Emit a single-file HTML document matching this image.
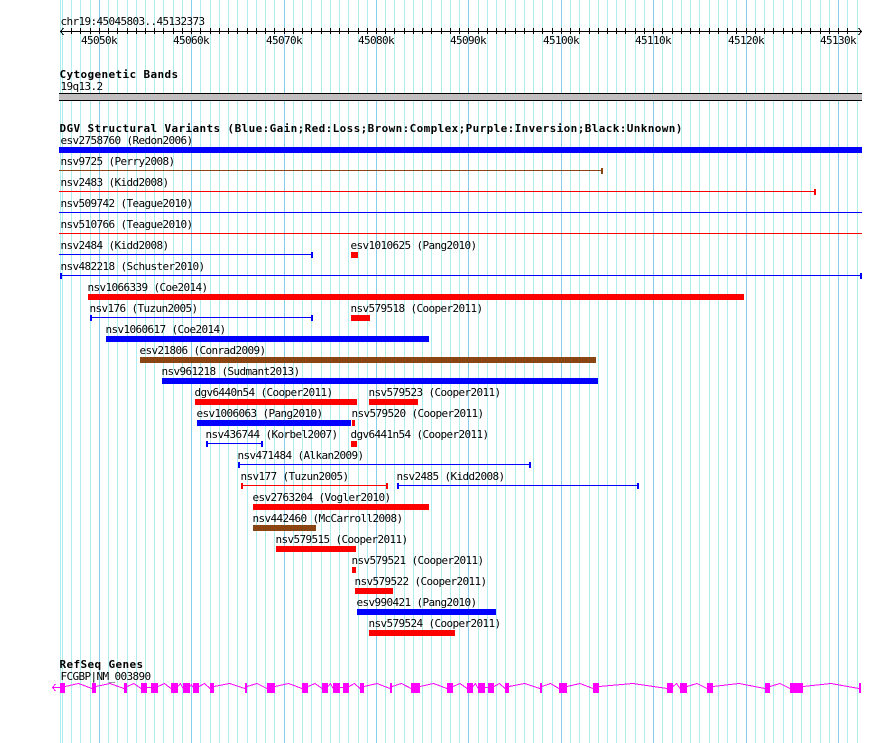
<!DOCTYPE html>
<html><head><meta charset="utf-8"><title>Tracks</title>
<style>
html,body{margin:0;padding:0;background:#fff}
svg{display:block}
text{font-family:"DejaVu Sans Mono","Liberation Mono",monospace;font-size:11px;letter-spacing:-.62px;fill:#000}
text.b{font-weight:bold;font-size:11px;letter-spacing:.38px}
</style></head><body>
<svg width="890" height="743" viewBox="0 0 890 743" xmlns="http://www.w3.org/2000/svg">
<g shape-rendering="crispEdges" fill="none">
<path stroke="#afeeee" d="M60.5 0V743M62.5 0V743M71.5 0V743M80.5 0V743M90.5 0V743M108.5 0V743M117.5 0V743M127.5 0V743M136.5 0V743M145.5 0V743M154.5 0V743M163.5 0V743M173.5 0V743M182.5 0V743M200.5 0V743M210.5 0V743M219.5 0V743M228.5 0V743M237.5 0V743M247.5 0V743M256.5 0V743M265.5 0V743M274.5 0V743M293.5 0V743M302.5 0V743M311.5 0V743M321.5 0V743M330.5 0V743M339.5 0V743M348.5 0V743M358.5 0V743M367.5 0V743M385.5 0V743M394.5 0V743M404.5 0V743M413.5 0V743M422.5 0V743M431.5 0V743M441.5 0V743M450.5 0V743M459.5 0V743M478.5 0V743M487.5 0V743M496.5 0V743M505.5 0V743M515.5 0V743M524.5 0V743M533.5 0V743M542.5 0V743M552.5 0V743M570.5 0V743M579.5 0V743M589.5 0V743M598.5 0V743M607.5 0V743M616.5 0V743M625.5 0V743M635.5 0V743M644.5 0V743M662.5 0V743M672.5 0V743M681.5 0V743M690.5 0V743M699.5 0V743M709.5 0V743M718.5 0V743M727.5 0V743M736.5 0V743M755.5 0V743M764.5 0V743M773.5 0V743M783.5 0V743M792.5 0V743M801.5 0V743M810.5 0V743M820.5 0V743M829.5 0V743M847.5 0V743M857.5 0V743"/>
<path stroke="#87ceeb" d="M99.5 0V743M191.5 0V743M284.5 0V743M376.5 0V743M468.5 0V743M561.5 0V743M653.5 0V743M746.5 0V743M838.5 0V743"/>
<!-- ruler -->
<path stroke="#000" d="M60 31.5H861M63.5 28L60.5 31.5L63.5 35M858.5 28L861.5 31.5L858.5 35M71.5 28V34M80.5 28V34M90.5 28V34M99.5 28V34M108.5 28V34M117.5 28V34M127.5 28V34M136.5 28V34M145.5 28V34M154.5 28V34M163.5 28V34M173.5 28V34M182.5 28V34M191.5 28V34M200.5 28V34M210.5 28V34M219.5 28V34M228.5 28V34M237.5 28V34M247.5 28V34M256.5 28V34M265.5 28V34M274.5 28V34M284.5 28V34M293.5 28V34M302.5 28V34M311.5 28V34M321.5 28V34M330.5 28V34M339.5 28V34M348.5 28V34M358.5 28V34M367.5 28V34M376.5 28V34M385.5 28V34M394.5 28V34M404.5 28V34M413.5 28V34M422.5 28V34M431.5 28V34M441.5 28V34M450.5 28V34M459.5 28V34M468.5 28V34M478.5 28V34M487.5 28V34M496.5 28V34M505.5 28V34M515.5 28V34M524.5 28V34M533.5 28V34M542.5 28V34M552.5 28V34M561.5 28V34M570.5 28V34M579.5 28V34M589.5 28V34M598.5 28V34M607.5 28V34M616.5 28V34M625.5 28V34M635.5 28V34M644.5 28V34M653.5 28V34M662.5 28V34M672.5 28V34M681.5 28V34M690.5 28V34M699.5 28V34M709.5 28V34M718.5 28V34M727.5 28V34M736.5 28V34M746.5 28V34M755.5 28V34M764.5 28V34M773.5 28V34M783.5 28V34M792.5 28V34M801.5 28V34M810.5 28V34M820.5 28V34M829.5 28V34M838.5 28V34M847.5 28V34"/>
<!-- cytoband -->
<rect x="59" y="93" width="803" height="8" fill="#c0bebf"/>
<rect x="59" y="93" width="803" height="1" fill="#000"/>
<rect x="59" y="100" width="803" height="1" fill="#000"/>
<!-- bars -->
<g fill="#0000ff">
<rect x="59" y="147" width="803" height="6"/>
<rect x="59" y="254" width="254" height="1"/><rect x="311" y="252" width="2" height="6"/>
<rect x="59" y="212" width="803" height="1"/>
<rect x="60" y="275" width="802" height="1"/><rect x="60" y="273" width="2" height="6"/><rect x="860" y="273" width="2" height="6"/>
<rect x="90" y="317" width="223" height="1"/><rect x="90" y="315" width="2" height="6"/><rect x="311" y="315" width="2" height="6"/>
<rect x="106" y="336" width="323" height="6"/>
<rect x="162" y="378" width="436" height="6"/>
<rect x="197" y="420" width="154" height="6"/>
<rect x="206" y="443" width="57" height="1"/><rect x="206" y="441" width="2" height="6"/><rect x="261" y="441" width="2" height="6"/>
<rect x="238" y="464" width="293" height="1"/><rect x="238" y="462" width="2" height="6"/><rect x="529" y="462" width="2" height="6"/>
<rect x="397" y="485" width="242" height="1"/><rect x="397" y="483" width="2" height="6"/><rect x="637" y="483" width="2" height="6"/>
<rect x="357" y="609" width="139" height="6"/>
</g>
<g fill="#ff0000">
<rect x="59" y="191" width="757" height="1"/><rect x="814" y="189" width="2" height="6"/>
<rect x="59" y="233" width="803" height="1"/>
<rect x="351" y="252" width="7" height="6"/>
<rect x="88" y="294" width="656" height="6"/>
<rect x="351" y="315" width="19" height="6"/>
<rect x="195" y="399" width="162" height="6"/>
<rect x="369" y="399" width="49" height="6"/>
<rect x="352" y="420" width="3" height="6"/>
<rect x="351" y="441" width="6" height="6"/>
<rect x="241" y="485" width="147" height="1"/><rect x="241" y="483" width="2" height="6"/><rect x="386" y="483" width="2" height="6"/>
<rect x="253" y="504" width="176" height="6"/>
<rect x="276" y="546" width="80" height="6"/>
<rect x="352" y="567" width="4" height="6"/>
<rect x="355" y="588" width="38" height="6"/>
<rect x="369" y="630" width="86" height="6"/>
</g>
<g fill="#8b4513">
<rect x="59" y="170" width="544" height="1"/><rect x="601" y="168" width="2" height="6"/>
<rect x="140" y="357" width="456" height="6"/>
<rect x="253" y="525" width="63" height="6"/>
</g>
<!-- gene -->
<path stroke="#ff00ff" d="M52 687.5H60M55.5 684L52.5 687.5L55.5 691M65 686.5L78.5 683.5L92 688.5M96 686.5L110 683.5L124 688.5M127 686.5L134 683.5L141 688.5M147 687.5H151M158 686.5L164.5 683.5L171 688.5M178 686.5L180.5 683.5L183 688.5M190 686.5L191.5 684.5L193 687.5M199 686.5L204.5 683.5L210 688.5M214 686.5L229.5 683.5L245 688.5M247 686.5L257 683.5L267 688.5M275 686.5L288.5 683.5L302 688.5M308 686.5L315 683.5L322 688.5M328 686.5L330.5 683.5L333 688.5M340 687.5H343M349 686.5L354.5 683.5L360 688.5M364 686.5L377 683.5L390 688.5M392 686.5L401.5 683.5L411 688.5M420 686.5L433.5 683.5L447 688.5M453 686.5L460 683.5L467 688.5M473 686.5L475.5 683.5L478 688.5M485 687.5H488M494 686.5L499.5 683.5L505 688.5M509 686.5L524.5 683.5L540 688.5M542 686.5L550.5 683.5L559 688.5M567 686.5L580 683.5L593 688.5M599 686.5L633 683.5L667 688.5M673 686.5L676.5 683.5L680 688.5M687 686.5L697 683.5L707 688.5M713 686.5L739 683.5L765 688.5M770 686.5L780 683.5L790 688.5M803 686.5L831 683.5L859 688.5"/>
<path fill="#ff00ff" d="M60 683h5v10h-5zM92 683h4v10h-4zM124 683h3v10h-3zM141 683h6v10h-6zM151 683h7v10h-7zM171 683h7v10h-7zM183 683h7v10h-7zM193 683h6v10h-6zM210 683h4v10h-4zM245 683h2v10h-2zM267 683h8v10h-8zM302 683h6v10h-6zM322 683h6v10h-6zM333 683h7v10h-7zM343 683h6v10h-6zM360 683h4v10h-4zM390 683h2v10h-2zM411 683h9v10h-9zM447 683h6v10h-6zM467 683h6v10h-6zM478 683h7v10h-7zM488 683h6v10h-6zM505 683h4v10h-4zM540 683h2v10h-2zM559 683h8v10h-8zM593 683h6v10h-6zM667 683h6v10h-6zM680 683h7v10h-7zM707 683h6v10h-6zM765 683h5v10h-5zM790 683h13v10h-13zM859 683h2v10h-2z"/>
</g>
<!-- ruler text -->
<text x="60.5" y="25">chr19:45045803..45132373</text>
<text x="81" y="44">45050k</text><text x="173" y="44">45060k</text><text x="266" y="44">45070k</text><text x="358" y="44">45080k</text><text x="450" y="44">45090k</text><text x="543" y="44">45100k</text><text x="635" y="44">45110k</text><text x="728" y="44">45120k</text><text x="820" y="44">45130k</text>
<text class="b" x="59.5" y="78">Cytogenetic Bands</text>
<text x="60.5" y="90">19q13.2</text>
<text class="b" x="59.5" y="132">DGV Structural Variants (Blue:Gain;Red:Loss;Brown:Complex;Purple:Inversion;Black:Unknown)</text>
<text x="60.5" y="144">esv2758760 (Redon2006)</text>
<text x="60.5" y="165">nsv9725 (Perry2008)</text>
<text x="60.5" y="186">nsv2483 (Kidd2008)</text>
<text x="60.5" y="207">nsv509742 (Teague2010)</text>
<text x="60.5" y="228">nsv510766 (Teague2010)</text>
<text x="60.5" y="249">nsv2484 (Kidd2008)</text>
<text x="350.5" y="249">esv1010625 (Pang2010)</text>
<text x="60.5" y="270">nsv482218 (Schuster2010)</text>
<text x="87.5" y="291">nsv1066339 (Coe2014)</text>
<text x="89.5" y="312">nsv176 (Tuzun2005)</text>
<text x="350.5" y="312">nsv579518 (Cooper2011)</text>
<text x="105.5" y="333">nsv1060617 (Coe2014)</text>
<text x="139.5" y="354">esv21806 (Conrad2009)</text>
<text x="161.5" y="375">nsv961218 (Sudmant2013)</text>
<text x="194.5" y="396">dgv6440n54 (Cooper2011)</text>
<text x="368.5" y="396">nsv579523 (Cooper2011)</text>
<text x="196.5" y="417">esv1006063 (Pang2010)</text>
<text x="351.5" y="417">nsv579520 (Cooper2011)</text>
<text x="205.5" y="438">nsv436744 (Korbel2007)</text>
<text x="350.5" y="438">dgv6441n54 (Cooper2011)</text>
<text x="237.5" y="459">nsv471484 (Alkan2009)</text>
<text x="240.5" y="480">nsv177 (Tuzun2005)</text>
<text x="396.5" y="480">nsv2485 (Kidd2008)</text>
<text x="252.5" y="501">esv2763204 (Vogler2010)</text>
<text x="252.5" y="522">nsv442460 (McCarroll2008)</text>
<text x="275.5" y="543">nsv579515 (Cooper2011)</text>
<text x="351.5" y="564">nsv579521 (Cooper2011)</text>
<text x="354.5" y="585">nsv579522 (Cooper2011)</text>
<text x="356.5" y="606">esv990421 (Pang2010)</text>
<text x="368.5" y="627">nsv579524 (Cooper2011)</text>
<text class="b" x="59.5" y="668">RefSeq Genes</text>
<text x="60.5" y="680">FCGBP|NM_003890</text>
</svg>
</body></html>
